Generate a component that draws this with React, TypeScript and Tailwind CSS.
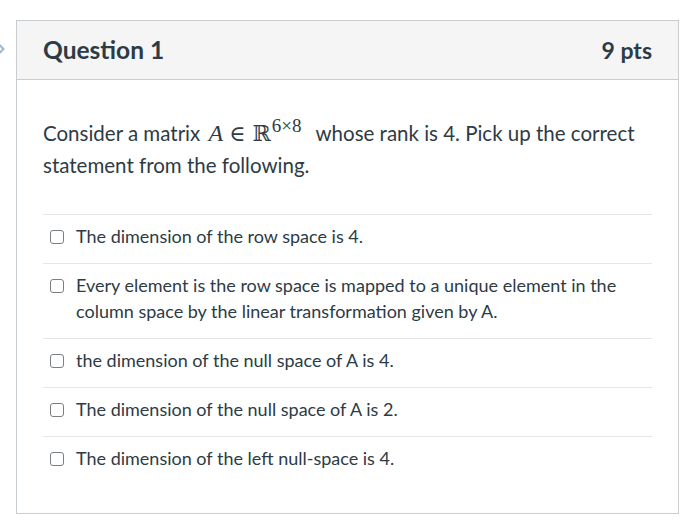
export default function App() {
  const answers = [
    "The dimension of the row space is 4.",
    "Every element is the row space is mapped to a unique element in the column space by the linear transformation given by A.",
    "the dimension of the null space of A is 4.",
    "The dimension of the null space of A is 2.",
    "The dimension of the left null-space is 4.",
  ];
  return (
    <div className="w-[700px] h-[530px] bg-white relative overflow-hidden" style={{ fontFamily: "Lato, 'Noto Sans', sans-serif" }}>
      <svg className="absolute left-[-4px] top-[42px]" width="10" height="14" viewBox="0 0 10 14">
        <path d="M2 1.5 L7.5 7 L2 12.5" fill="none" stroke="#9fb7cc" strokeWidth="2" />
      </svg>
      <div className="ml-[16px] mr-[21px] mt-[20px] h-[494px] border border-[#c7cdd1] flex flex-col">
        <div className="h-[59px] bg-[#f5f5f5] border-b border-[#c7cdd1] flex items-center justify-between pl-[26px] pr-[26px]">
          <span className="text-[24.5px] font-bold text-[#2d3b45]">Question 1</span>
          <span className="text-[23px] font-bold text-[#2d3b45]">9 pts</span>
        </div>
        <div className="px-[26px] pt-[37px]">
          <p className="text-[20.5px] leading-[32px] text-[#2d3b45]">
            Consider a matrix{" "}
            <span className="leading-[0]" style={{ fontFamily: "'Liberation Serif', serif" }}>
              <i className="text-[24px] ml-[3px]">A</i>
              <span className="text-[22px] ml-[6px]" style={{ fontFamily: "'DejaVu Serif', serif" }}>∈</span>
              <span className="text-[22px] ml-[7px]" style={{ fontFamily: "'DejaVu Serif', serif" }}>ℝ</span>
              <span className="text-[19px] relative top-[-9px] ml-[1px]">6×8</span>
            </span>
            <span className="ml-[14px]">whose rank is 4. Pick up the correct statement from the following.</span>
          </p>
          <div className="mt-[33px] flex flex-col">
            {answers.map((a, i) => (
              <div key={i} className="border-t border-[#e6e6e6] flex items-start pt-[8px] pb-[14px]">
                <div className="mt-[7px] ml-[7px] w-[14px] h-[14px] shrink-0 border-[1.5px] border-[#7a7f84] rounded-[3px]" />
                <span className="ml-[12px] text-[18px] leading-[26px] text-[#2d3b45]">{a}</span>
              </div>
            ))}
          </div>
        </div>
      </div>
    </div>
  );
}
